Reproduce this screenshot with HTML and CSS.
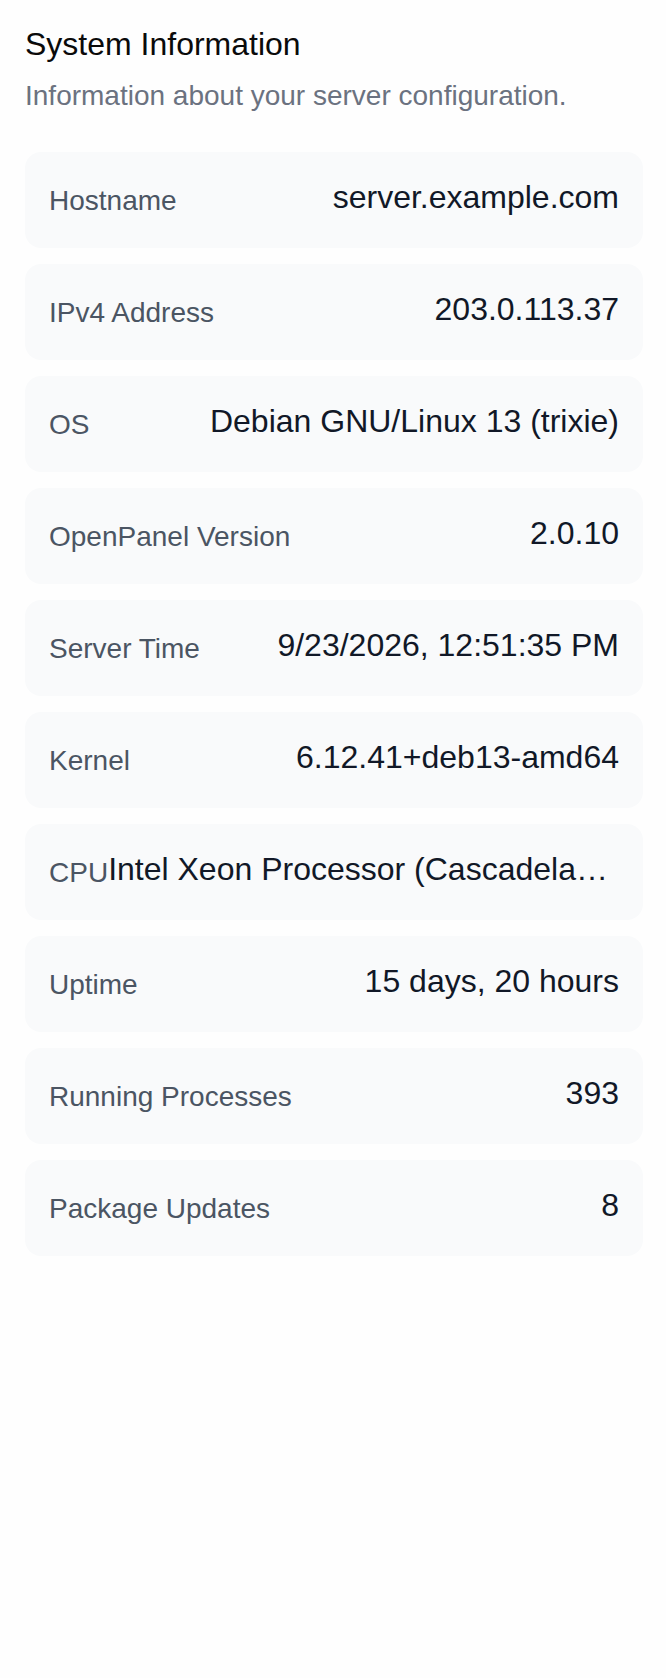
FILE: index.html
```html
<!DOCTYPE html>
<html lang="en">
<head>
    <meta charset="UTF-8">
    <meta name="viewport" content="width=device-width, initial-scale=1.0">
    <title>System Information</title>
    <link rel="stylesheet" href="styles.css">
</head>
<body>
    <div class="panel">
        <div class="panel-header">
            <h2 class="panel-title">System Information</h2>
            <p class="panel-desc">Information about your server configuration.</p>
        </div>

        <div class="info-list">
            <div class="info-row">
                <span class="info-label">Hostname</span>
                <span class="info-value">server.example.com</span>
            </div>
            <div class="info-row">
                <span class="info-label">IPv4 Address</span>
                <span class="info-value">203.0.113.37</span>
            </div>
            <div class="info-row">
                <span class="info-label">OS</span>
                <span class="info-value">Debian GNU/Linux 13 (trixie)</span>
            </div>
            <div class="info-row">
                <span class="info-label">OpenPanel Version</span>
                <span class="info-value">2.0.10</span>
            </div>
            <div class="info-row">
                <span class="info-label">Server Time</span>
                <span class="info-value">9/23/2026, 12:51:35 PM</span>
            </div>
            <div class="info-row">
                <span class="info-label">Kernel</span>
                <span class="info-value">6.12.41+deb13-amd64</span>
            </div>
            <div class="info-row">
                <span class="info-label">CPU</span>
                <span class="info-value">Intel Xeon Processor (Cascadelake)</span>
            </div>
            <div class="info-row">
                <span class="info-label">Uptime</span>
                <span class="info-value">15 days, 20 hours</span>
            </div>
            <div class="info-row">
                <span class="info-label">Running Processes</span>
                <span class="info-value">393</span>
            </div>
            <div class="info-row">
                <span class="info-label">Package Updates</span>
                <span class="info-value">8</span>
            </div>
        </div>
    </div>
</body>
</html>
```
FILE: styles.css
```css
body {
    margin: 0;
    background-color: #fefefe;
    font-family: "Liberation Sans", Arial, sans-serif;
}

.panel {
    padding: 24px 23px 24px 25px;
}

.panel-title {
    margin: 0;
    font-size: 32px;
    font-weight: normal;
    line-height: 40px;
    color: #0a0a0a;
}

.panel-desc {
    margin: 12px 0 0;
    font-size: 28px;
    line-height: 40px;
    color: #6b7280;
}

.info-list {
    display: flex;
    flex-direction: column;
    gap: 16px;
    margin-top: 36px;
}

.info-row {
    display: flex;
    justify-content: space-between;
    align-items: flex-start;
    height: 48px;
    padding: 24px;
    background-color: #f9fafb;
    border-radius: 16px;
}

.info-label {
    flex-shrink: 0;
    margin-top: 5px;
    font-size: 28px;
    line-height: 40px;
    color: #4b5563;
}

.info-value {
    min-width: 0;
    margin-top: 1px;
    font-size: 32px;
    line-height: 40px;
    color: #111827;
    white-space: nowrap;
    overflow: hidden;
    text-overflow: ellipsis;
}
```
